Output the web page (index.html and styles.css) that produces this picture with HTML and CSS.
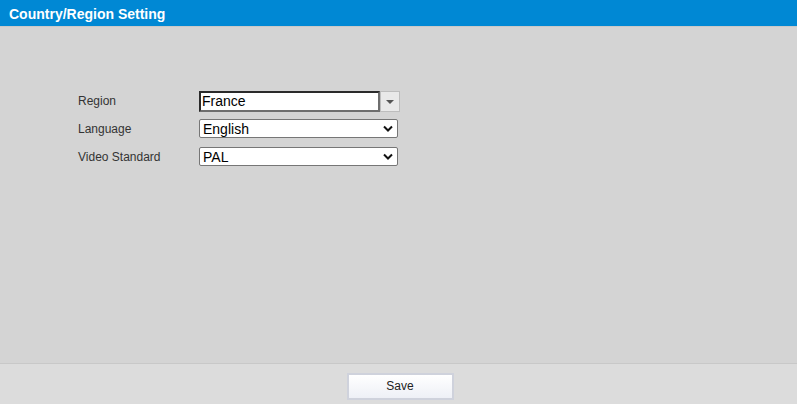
FILE: index.html
```html
<!DOCTYPE html>
<html>
<head>
    <meta charset="utf-8" />
    <title>Country/Region Setting</title>
    <link rel="stylesheet" href="styles.css">
</head>
<body>
    <div class="pagina">
        <div class="titulo">Country/Region Setting</div>

        <div class="contenido">
            <div class="fila">
                <label>Region</label>
                <div class="combo">
                    <div class="comboTexto">France</div>
                    <div class="comboBoton">
                        <svg width="8" height="4" viewBox="0 0 8 4"><path d="M0 0H8L4 4Z" fill="#555"/></svg>
                    </div>
                </div>
            </div>
            <div class="fila">
                <label>Language</label>
                <div class="lista">
                    <span>English</span>
                    <svg width="10" height="7" viewBox="0 0 10 7"><path d="M1 1.5L5 5.5L9 1.5" fill="none" stroke="#111" stroke-width="2"/></svg>
                </div>
            </div>
            <div class="fila">
                <label>Video Standard</label>
                <div class="lista">
                    <span>PAL</span>
                    <svg width="10" height="7" viewBox="0 0 10 7"><path d="M1 1.5L5 5.5L9 1.5" fill="none" stroke="#111" stroke-width="2"/></svg>
                </div>
            </div>
        </div>

        <div class="pie">
            <button class="botonGuardar">Save</button>
        </div>
    </div>
</body>
</html>
```

FILE: styles.css
```css
body {
    margin: 0;
    font-family: "Liberation Sans", Arial, sans-serif;
}
.pagina {
    width: 797px;
    height: 404px;
    display: flex;
    flex-direction: column;
    background-color: #d4d4d4;
}
.titulo {
    height: 27px;
    line-height: 28px;
    background-color: #0088d4;
    color: #ffffff;
    font-weight: bold;
    font-size: 14px;
    padding-left: 9px;
    border-bottom: 1px solid #c9c9c9;
    box-sizing: border-box;
}
.contenido {
    flex: 1;
    padding-top: 64px;
    padding-left: 78px;
}
.fila {
    display: flex;
    align-items: flex-start;
    height: 19px;
    margin-bottom: 9px;
}
.fila:first-child {
    height: 21px;
    margin-bottom: 7px;
}
label {
    width: 121px;
    font-size: 12px;
    line-height: 19px;
    padding-top: 1px;
    color: #333333;
}
.fila:first-child label {
    line-height: 20px;
    padding-top: 0;
}
.combo {
    display: flex;
    height: 21px;
}
.comboTexto {
    width: 181px;
    height: 21px;
    box-sizing: border-box;
    border: 2px solid #2a2a2a;
    border-right-color: #6e6e6e;
    border-bottom-color: #6e6e6e;
    background-color: #ffffff;
    font-size: 14px;
    line-height: 16px;
    padding-left: 1px;
    color: #000000;
}
.comboBoton {
    width: 20px;
    height: 21px;
    box-sizing: border-box;
    border: 1px solid #bdbdbd;
    background-color: #e9e9e9;
    display: flex;
    align-items: center;
    justify-content: center;
}
.lista {
    width: 199px;
    height: 19px;
    box-sizing: border-box;
    border: 1px solid #767676;
    border-radius: 2px;
    background-color: #ffffff;
    display: flex;
    align-items: center;
    justify-content: space-between;
    padding: 0 4px 0 3px;
    font-size: 14px;
    color: #000000;
}
.pie {
    height: 41px;
    background-color: #dcdcdc;
    border-top: 1px solid #c8c8c8;
    box-sizing: border-box;
    display: flex;
    justify-content: center;
    align-items: center;
}
.botonGuardar {
    width: 107px;
    height: 27px;
    margin-top: 4px;
    margin-left: 3px;
    border: 2px solid #cfd2dc;
    background: linear-gradient(#ffffff, #eef0f6);
    font-family: "Liberation Sans", Arial, sans-serif;
    font-size: 12px;
    color: #222222;
}
```
